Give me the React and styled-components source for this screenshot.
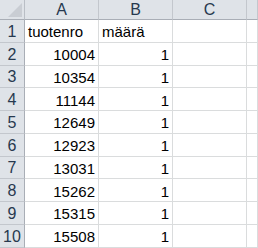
import React from 'react';
import styled, { createGlobalStyle } from 'styled-components';

const GlobalStyle = createGlobalStyle`
  html, body {
    margin: 0;
    padding: 0;
    background: #ffffff;
    overflow: hidden;
  }
`;

const Sheet = styled.div`
  display: grid;
  grid-template-columns: 25px 74px 74px 74px 1fr;
  grid-template-rows: 20px repeat(10, 22.75px);
  width: 258px;
  height: 248px;
  overflow: hidden;
  font-family: "Liberation Sans", Arial, sans-serif;
  font-size: 15px;
`;

const Corner = styled.div`
  position: relative;
  background: #dfe3e8;
  border-right: 1px solid #b9bec5;
  border-bottom: 1px solid #a9aeb6;

  &::after {
    content: '';
    position: absolute;
    right: 2px;
    bottom: 2px;
    width: 0;
    height: 0;
    border-left: 14px solid transparent;
    border-bottom: 14px solid #c9cdd3;
  }
`;

const ColHead = styled.div`
  display: flex;
  align-items: center;
  justify-content: center;
  background: #dfe3e8;
  color: #27394f;
  font-size: 16px;
  border-right: 1px solid #c3c7cd;
  border-bottom: 1px solid #a9aeb6;
  padding-top: 1px;
`;

const RowHead = styled.div`
  display: flex;
  align-items: center;
  justify-content: center;
  background: #dfe3e8;
  color: #27394f;
  font-size: 16px;
  border-right: 1px solid #a9aeb6;
  border-bottom: 1px solid #c3c7cd;
  padding-top: 2px;
`;

const Cell = styled.div`
  display: flex;
  align-items: center;
  justify-content: ${p => (p.$num ? 'flex-end' : 'flex-start')};
  padding: 2px 3px 0;
  color: #000;
  white-space: nowrap;
  overflow: hidden;
  border-right: 1px solid #dadcdd;
  border-bottom: 1px solid #dadcdd;
`;

const rows = [
  ['tuotenro', 'määrä'],
  [10004, 1],
  [10354, 1],
  [11144, 1],
  [12649, 1],
  [12923, 1],
  [13031, 1],
  [15262, 1],
  [15315, 1],
  [15508, 1],
];

const App = () => {
  return (
    <>
      <GlobalStyle />
      <Sheet>
        <Corner />
        <ColHead>A</ColHead>
        <ColHead>B</ColHead>
        <ColHead>C</ColHead>
        <ColHead />
        {rows.map((r, i) => (
          <React.Fragment key={i}>
            <RowHead>{i + 1}</RowHead>
            {r.map((v, j) => (
              <Cell key={j} $num={typeof v === 'number'}>{v}</Cell>
            ))}
            <Cell />
            <Cell />
          </React.Fragment>
        ))}
      </Sheet>
    </>
  );
};

export default App;
